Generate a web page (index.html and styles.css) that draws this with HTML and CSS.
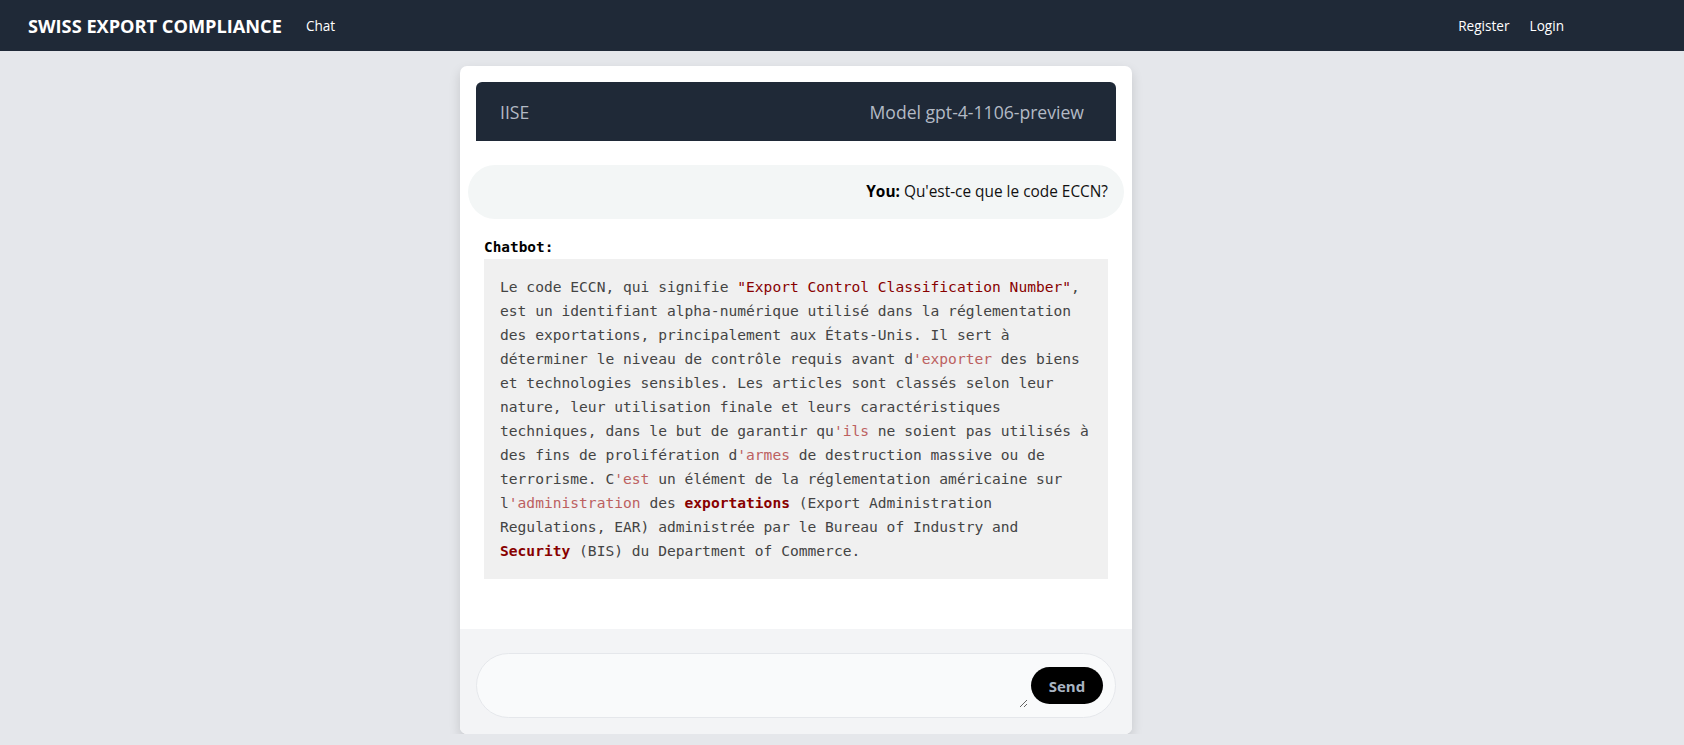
FILE: index.html
```html
<!DOCTYPE html>
<html lang="fr">
<head>
<meta charset="utf-8">
<title>Swiss Export Compliance</title>
<link rel="stylesheet" href="styles.css">
</head>
<body>
<nav class="navbar">
  <div class="nav-left">
    <a class="brand" href="#">SWISS EXPORT COMPLIANCE</a>
    <a class="nav-link" href="#">Chat</a>
  </div>
  <div class="nav-right">
    <a class="nav-link" href="#">Register</a>
    <a class="nav-link" href="#">Login</a>
  </div>
</nav>
<main class="page">
  <section class="chat-card">
    <header class="chat-header">
      <span class="org">IISE</span>
      <span class="model">Model gpt-4-1106-preview</span>
    </header>
    <div class="messages">
      <div class="msg-user"><strong>You:</strong> Qu'est-ce que le code ECCN?</div>
      <div class="msg-bot">
        <div class="bot-label">Chatbot:</div>
        <pre class="code"><code>Le code ECCN, qui signifie <span class="hl-string">"Export Control Classification Number"</span>, est un identifiant alpha-numérique utilisé dans la réglementation des exportations, principalement aux États-Unis. Il sert à déterminer le niveau de contrôle requis avant d<span class="hl-symbol">'exporter</span> des biens et technologies sensibles. Les articles sont classés selon leur nature, leur utilisation finale et leurs caractéristiques techniques, dans le but de garantir qu<span class="hl-symbol">'ils</span> ne soient pas utilisés à des fins de prolifération d<span class="hl-symbol">'armes</span> de destruction massive ou de terrorisme. C<span class="hl-symbol">'est</span> un élément de la réglementation américaine sur l<span class="hl-symbol">'administration</span> des <span class="hl-title">exportations</span> (Export Administration Regulations, EAR) administrée par le Bureau of Industry and <span class="hl-title">Security</span> (BIS) du Department of Commerce.</code></pre>
      </div>
    </div>
    <footer class="composer">
      <form class="input-wrap">
        <textarea class="input" aria-label="Message"></textarea>
        <button class="send" type="button">Send</button>
      </form>
    </footer>
  </section>
</main>
</body>
</html>
```

FILE: styles.css
```css
* {
  box-sizing: border-box;
}

html,
body {
  margin: 0;
}

body {
  background: #e5e7eb;
  font-family: "Open Sans", "Noto Sans", sans-serif;
  color: #111827;
}

.navbar {
  height: 51px;
  background: #1f2937;
  display: flex;
  align-items: center;
  justify-content: space-between;
  padding: 0 120px 0 28px;
}

.nav-left,
.nav-right {
  display: flex;
  align-items: center;
}

.nav-left {
  gap: 24px;
}

.nav-right {
  gap: 20px;
}

.brand {
  color: #ffffff;
  font-weight: 700;
  font-size: 18.2px;
  text-decoration: none;
}

.nav-link {
  color: #ffffff;
  font-size: 13.6px;
  text-decoration: none;
}

.page {
  display: flex;
  justify-content: center;
  padding: 15px 92px 0 0;
}

.chat-card {
  width: 672px;
  background: #ffffff;
  border-radius: 7px;
  box-shadow: 0 5px 12px rgba(0, 0, 0, 0.14);
  overflow: hidden;
  padding-top: 16px;
}

.chat-header {
  margin: 0 16px;
  height: 59px;
  background: #1f2937;
  border-radius: 6px 6px 0 0;
  display: flex;
  align-items: center;
  justify-content: space-between;
  padding: 0 32px 0 24px;
  color: #b3bac5;
  font-size: 17.6px;
}

.messages {
  padding: 24px 8px 50px;
}

.msg-user {
  background: #f3f6f6;
  border-radius: 27px;
  padding: 16px;
  text-align: right;
  font-size: 15.4px;
  line-height: 22px;
  color: #111;
  margin-bottom: 16px;
}

.msg-user strong {
  color: #000;
}

.msg-bot {
  padding: 0 16px;
}

.bot-label {
  font-family: "DejaVu Sans Mono", monospace;
  font-weight: 700;
  font-size: 14.4px;
  line-height: 24px;
  color: #000;
}

.code {
  margin: 0;
  background: #f0f0f0;
  color: #444444;
  padding: 16px;
  font-family: "DejaVu Sans Mono", monospace;
  font-size: 14.6px;
  line-height: 24px;
  white-space: pre-wrap;
}

.code code {
  font: inherit;
}

.hl-string {
  color: #880000;
}

.hl-symbol {
  color: #bc6060;
}

.hl-title {
  color: #880000;
  font-weight: 700;
}

.composer {
  background: #f3f4f6;
  padding: 24px 16px 16px;
}

.input-wrap {
  display: flex;
  align-items: center;
  height: 65px;
  border: 1px solid #e5e7eb;
  background: #f9fafb;
  border-radius: 33px;
  padding: 0 12px 0 16px;
  margin: 0;
}

.input {
  flex: 1;
  height: 45px;
  border: none;
  background: transparent;
  outline: none;
  font-family: inherit;
  font-size: 15px;
  padding: 8px;
  margin-right: 3px;
}

.send {
  width: 72px;
  height: 37px;
  border: none;
  border-radius: 19px;
  background: #000000;
  color: #a9b4c2;
  font-family: inherit;
  font-weight: 700;
  font-size: 15px;
  padding: 0;
}
```
